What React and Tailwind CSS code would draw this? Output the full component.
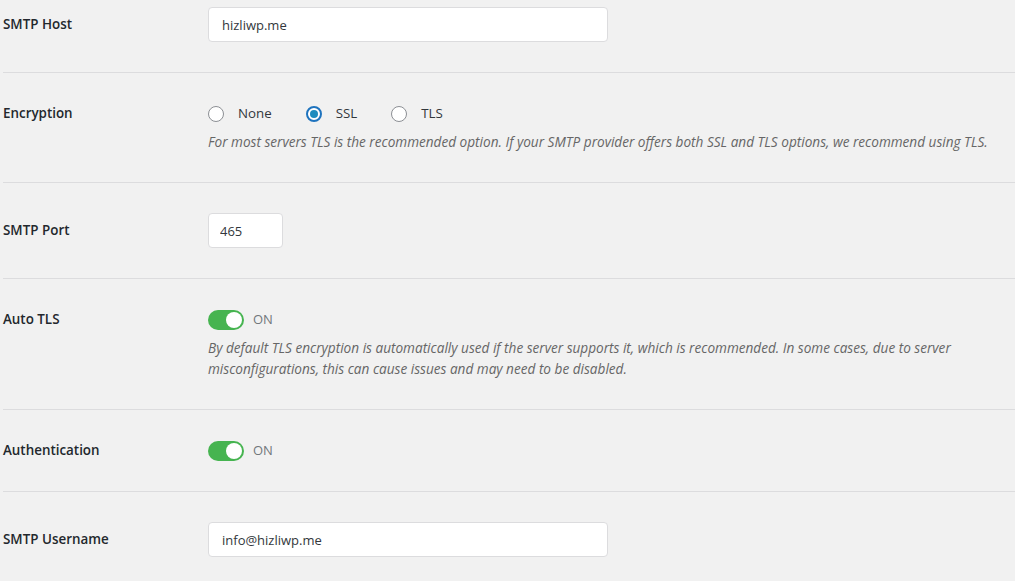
import React from "react";

const Row = ({ label, line, children, last }) => (
  <div className={`flex ${last ? "" : "border-b border-[#dcdcde]"}`}>
    <div
      className={`w-[205px] shrink-0 py-[30px] pr-2.5 text-[13.4px] font-semibold text-[#23282d] ${line}`}
    >
      {label}
    </div>
    <div className="flex-1 py-[30px] pr-2.5">{children}</div>
  </div>
);

const Toggle = () => (
  <div className="flex h-[21px] items-center gap-[9px]">
    <span className="relative inline-block h-5 w-9 rounded-full bg-[#46b450]">
      <span className="absolute right-[2px] top-[2px] h-4 w-4 rounded-full bg-white" />
    </span>
    <span className="text-[13px] text-[#72777c]">ON</span>
  </div>
);

const Radio = ({ label, checked }) => (
  <label className="flex items-center gap-[14px]">
    <span
      className={`flex h-4 w-4 items-center justify-center rounded-full border bg-white ${
        checked ? "border-[#1e73be] border-2" : "border-[#8c8f94]"
      }`}
    >
      {checked && <span className="h-2 w-2 rounded-full bg-[#1e8cbe]" />}
    </span>
    <span className="text-[13.3px] text-[#32373c]">{label}</span>
  </label>
);

const Desc = ({ children }) => (
  <p className="mt-[7px] text-[13.6px] italic leading-[21px] text-[#666]">{children}</p>
);

export default function App() {
  return (
    <div
      className="min-h-[581px] bg-[#f1f1f1] pl-[3px] -mt-[23px]"
      style={{ fontFamily: '"Open Sans", "Noto Sans", sans-serif' }}
    >
      <Row label="SMTP Host" line="leading-[35px]">
        <input
          readOnly
          value="hizliwp.me"
          className="h-[35px] w-[400px] rounded-[4px] border border-[#dcdcde] bg-white px-[13px] text-[13px] text-[#32373c] outline-none"
        />
      </Row>
      <Row label="Encryption" line="leading-[21px]">
        <div className="flex h-[21px] items-center gap-[34px]">
          <Radio label="None" />
          <Radio label="SSL" checked />
          <Radio label="TLS" />
        </div>
        <Desc>
          For most servers TLS is the recommended option. If your SMTP provider offers both SSL and TLS
          options, we recommend using TLS.
        </Desc>
      </Row>
      <Row label="SMTP Port" line="leading-[35px]">
        <input
          readOnly
          value="465"
          className="h-[35px] w-[75px] rounded-[4px] border border-[#dcdcde] bg-white px-[11px] text-[13px] text-[#32373c] outline-none"
        />
      </Row>
      <Row label="Auto TLS" line="leading-[21px]">
        <Toggle />
        <Desc>
          By default TLS encryption is automatically used if the server supports it, which is
          recommended. In some cases, due to server misconfigurations, this can cause issues and may
          need to be disabled.
        </Desc>
      </Row>
      <Row label="Authentication" line="leading-[21px]">
        <Toggle />
      </Row>
      <Row label="SMTP Username" line="leading-[35px]" last>
        <input
          readOnly
          value="info@hizliwp.me"
          className="h-[35px] w-[400px] rounded-[4px] border border-[#dcdcde] bg-white px-[13px] text-[13px] text-[#32373c] outline-none"
        />
      </Row>
    </div>
  );
}
